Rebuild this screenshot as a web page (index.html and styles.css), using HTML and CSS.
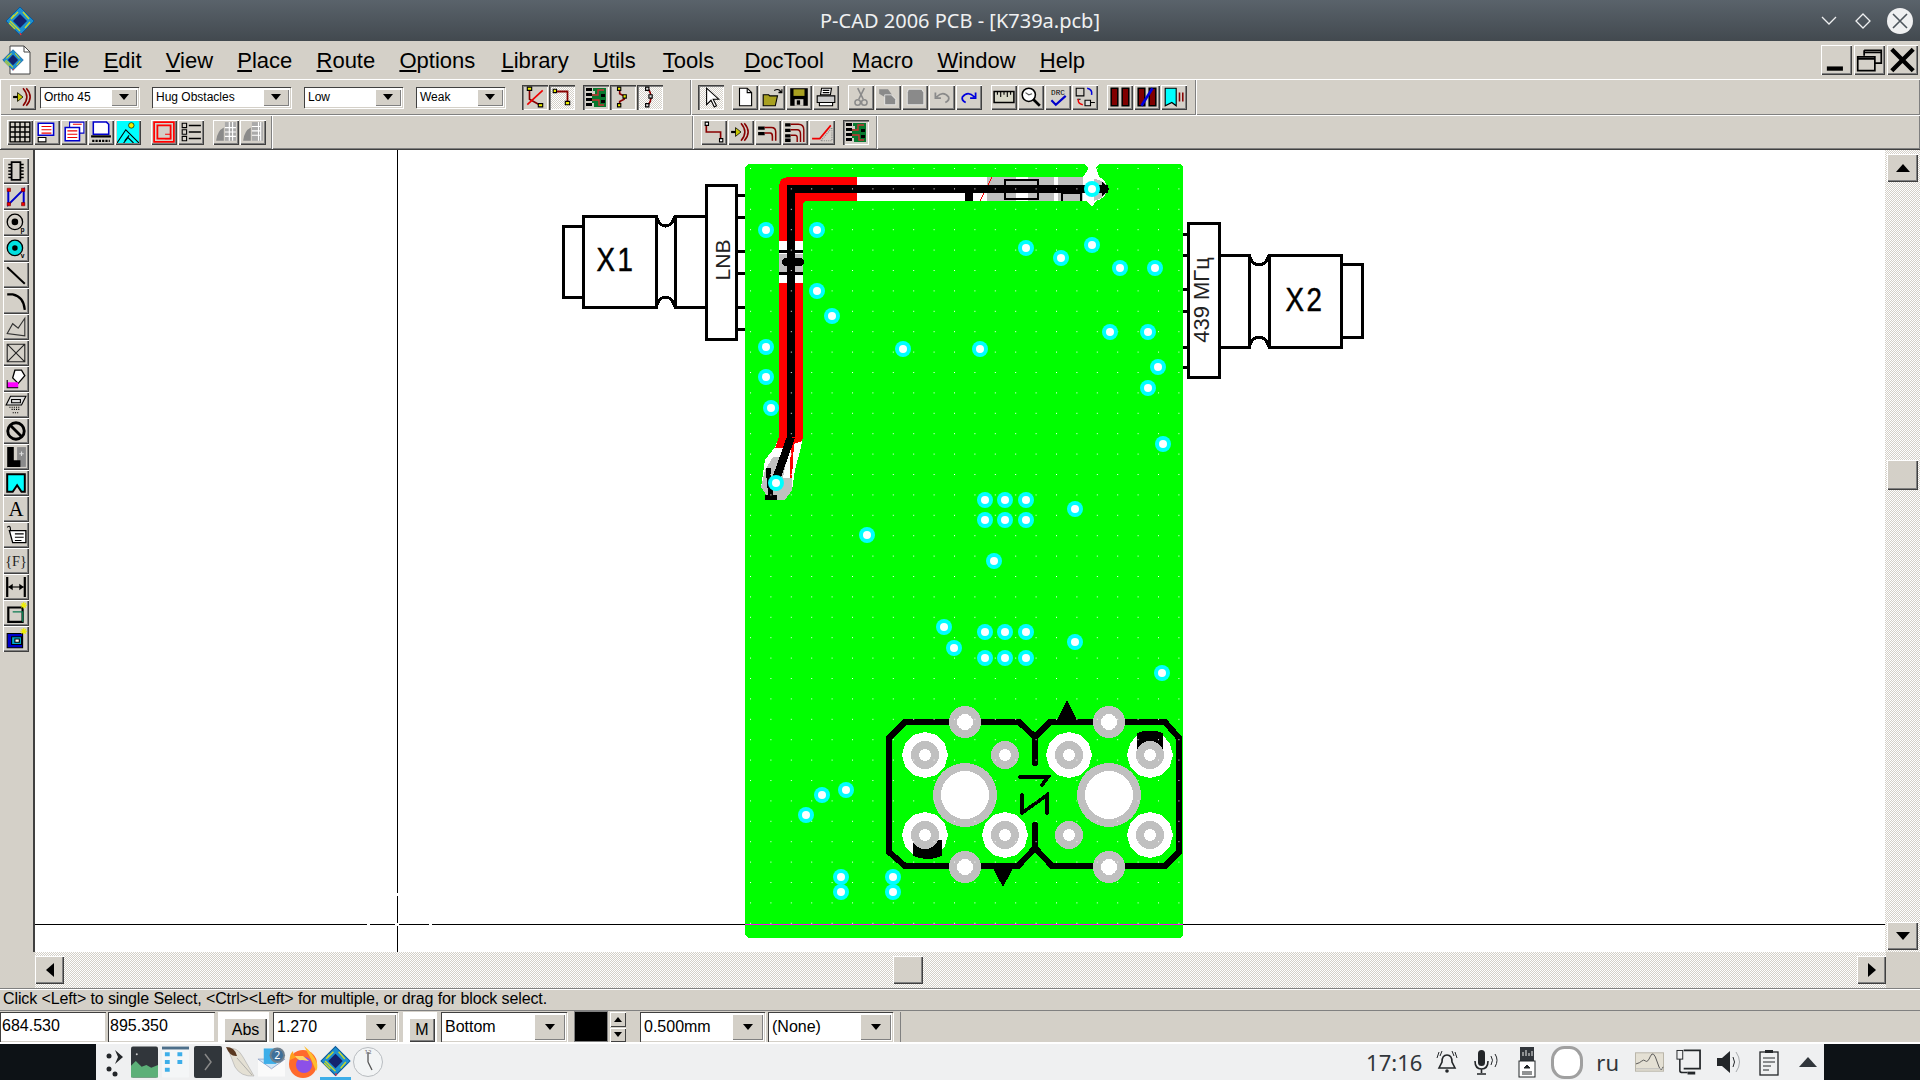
FILE: index.html
```html
<!DOCTYPE html>
<html lang="en">
<head>
<meta charset="utf-8">
<title>P-CAD 2006 PCB - [K739a.pcb]</title>
<link rel="stylesheet" href="styles.css">
</head>
<body>
<svg class="defs" width="0" height="0">
  <defs>
    <symbol id="logo" viewBox="0 0 30 30">
      <path d="M15 1 29 15 15 29 1 15z" fill="#1d8fd0" stroke="#0a5a9a"/>
      <path d="M8 15 15 8 22 15 15 22z" fill="#14246e"/>
      <path d="M5 15l5 5 5 5M7 12l6-6M18 6l6 7M20 22l5-6M4 17l6 6M9 9l-3 4" stroke="#c8d828" stroke-width="1.4" fill="none"/>
      <path d="M15 27l1 2" stroke="#e03040" stroke-width="1.5"/>
    </symbol>
    <g id="v" class="via"><circle r="8" fill="#00ffff"/><circle r="4" fill="#fff"/></g>
    <g id="oct"><path d="M0-23 12-20 20-11 23 0 20 11 12 20 0 23-12 20-20 11-23 0-20-11-12-20z" fill="#fff"/><circle r="14" fill="#c0c0c0"/><circle r="6" fill="#fff"/></g>
    <g id="gp"><circle r="14" fill="#c0c0c0"/><circle r="6" fill="#fff"/></g>
    <g id="tp"><circle r="16" fill="#c0c0c0"/><circle r="8" fill="#fff"/></g>
    <g id="hole"><circle r="32" fill="#c0c0c0"/><circle r="24" fill="#fff"/></g>
    <pattern id="dots" x="750" y="168" width="20.4" height="20.4" patternUnits="userSpaceOnUse"><rect width="1" height="1" fill="#fff"/></pattern>
  </defs>
</svg>

<header class="titlebar">
  <svg class="title-logo"><use href="#logo"/></svg>
  <div class="title-text">P-CAD 2006 PCB - [K739a.pcb]</div>
  <div class="win-controls">
    <svg class="wc" viewBox="0 0 20 20"><path d="M3 6l7 7 7-7" fill="none" stroke="#eff0f1" stroke-width="1.3"/></svg>
    <svg class="wc" viewBox="0 0 20 20"><path d="M10 3l7 7-7 7-7-7z" fill="none" stroke="#eff0f1" stroke-width="1.3"/></svg>
    <svg class="wc-close" viewBox="0 0 26 26"><circle cx="13" cy="13" r="13" fill="#eff0f1"/><path d="M6 6l14 14M20 6 6 20" stroke="#4d555c" stroke-width="1.6"/></svg>
  </div>
</header>

<nav class="menubar">
  <svg class="doc-icon" viewBox="0 0 30 30"><path d="M8 1h14l6 6v22H8z" fill="#fff" stroke="#444"/><path d="M22 1v6h6" fill="none" stroke="#444"/><use href="#logo" x="0" y="4" width="22" height="22"/></svg>
  <div class="menu-items">
    <span><u>F</u>ile</span><span><u>E</u>dit</span><span><u>V</u>iew</span><span><u>P</u>lace</span><span><u>R</u>oute</span><span class="m2"><u>O</u>ptions</span><span><u>L</u>ibrary</span><span class="m3"><u>U</u>tils</span><span class="m6"><u>T</u>ools</span><span class="m4"><u>D</u>ocTool</span><span><u>M</u>acro</span><span><u>W</u>indow</span><span><u>H</u>elp</span>
  </div>
  <div class="mdi-btns">
    <div class="mdi"><svg viewBox="0 0 28 28"><path d="M5 22h15" stroke="#000" stroke-width="4"/></svg></div>
    <div class="mdi"><svg viewBox="0 0 28 28"><path d="M9 5h16v12H19M9 5v5M9 7h16" fill="none" stroke="#000" stroke-width="1.6"/><path d="M3 11h16v13H3zM3 13h16" fill="#d4d0c8" stroke="#000" stroke-width="1.6"/></svg></div>
    <div class="mdi"><svg viewBox="0 0 28 28"><path d="M4 4l20 20M24 4 4 24" stroke="#000" stroke-width="4"/></svg></div>
  </div>
</nav>

<section class="toolrow row1">
  <div class="bar bar-a">
    <div class="btn"><svg viewBox="0 0 20 20"><path d="M1 10h6" stroke="#000" stroke-width="2"/><path d="M5 6l5 4-5 4z" fill="#c8c800" stroke="#000" stroke-width=".7"/><path d="M10 2q7 8 0 16M13 2q7 8 0 16" fill="none" stroke="#800" stroke-width="1.4"/></svg></div>
    <div class="combo c99 ml4"><span>Ortho 45</span><i class="arr"></i></div>
    <div class="combo c139 ml13"><span>Hug Obstacles</span><i class="arr"></i></div>
    <div class="combo c99 ml13"><span>Low</span><i class="arr"></i></div>
    <div class="combo c89 ml13"><span>Weak</span><i class="arr"></i></div>
    <div class="btn pressed ml17"><svg viewBox="0 0 20 20"><path d="M5 2v10l9 5" fill="none" stroke="#800" stroke-width="1.5"/><path d="M3 17 17 4" stroke="#e00" stroke-width="1.5"/><path d="M3 1h4v3H3zM13 16h4v3h-4z" fill="#ee0" stroke="#000"/></svg></div>
    <div class="btn pressed white"><svg viewBox="0 0 20 20"><path d="M4 5h11v10" fill="none" stroke="#800" stroke-width="1.6"/><path d="M2 3h3v3H2zM13 14h4v3h-4z" fill="#ee0" stroke="#000"/></svg></div>
    <div class="btn pressed ml8"><svg viewBox="0 0 22 22"><path d="M1 2h6v3H1zM1 7h6v3H1zM1 12h6v3H1zM1 17h6v3H1z"/><path d="M8 2h13v19H9v-4H7V8h3V5H8z" fill="#087a30"/><path d="M7 9h6V4h6M7 14h7v5h5" fill="none" stroke="#c33" stroke-width="1.4"/><path d="M16 8h4v3h-4zM16 14h4v3h-4z" fill="#000"/></svg></div>
    <div class="btn pressed"><svg viewBox="0 0 20 20"><path d="M7 3v4l4 2v3l-4 2v4" fill="none" stroke="#800" stroke-width="1.5"/><path d="M5 1h3v3H5zM5 16h3v3H5zM10 8h3v3h-3z" fill="#ee0" stroke="#000"/></svg></div>
    <div class="btn pressed white"><svg viewBox="0 0 20 20"><path d="M8 2q6 8 0 16" fill="none" stroke="#800" stroke-width="1.5"/><path d="M6 1h3v3H6zM6 16h3v3H6zM9 8h3v3H9z" fill="#ddd" stroke="#000"/></svg></div>
  </div>
  <div class="bar bar-b">
    <div class="btn pressed white"><svg viewBox="0 0 20 20"><path d="M6 2v15l4-4 3 6 2-1-3-6h5z" fill="#fff" stroke="#000"/></svg></div>
    <div class="grp ml8">
      <div class="btn"><svg viewBox="0 0 20 20"><path d="M5 2h7l4 4v12H5z" fill="#fff" stroke="#000"/><path d="M12 2v4h4" fill="none" stroke="#000"/></svg></div>
      <div class="btn"><svg viewBox="0 0 20 20"><path d="M2 8h5l1 1h7l-2 9H2z" fill="#a8a020" stroke="#000"/><path d="M12 4q4-2 6 1l-2 1h3v-3" fill="none" stroke="#000"/></svg></div>
      <div class="btn"><svg viewBox="0 0 20 20"><path d="M2 2h16v16H2z" fill="#000"/><path d="M5 3h10v6H5z" fill="#a8a020"/><path d="M6 12h8v6H6z" fill="#d4d0c8"/><path d="M8 13h3v4H8z"/></svg></div>
      <div class="btn"><svg viewBox="0 0 20 20"><path d="M6 2h9l-1 6H5z" fill="#fff" stroke="#000"/><path d="M2 9h16v6H2z" fill="#ccc" stroke="#000"/><path d="M4 15h12v3H4z" fill="#fff" stroke="#000"/><path d="M7 4h6M7 6h6" stroke="#000"/></svg></div>
    </div>
    <div class="grp ml9">
      <div class="btn"><svg viewBox="0 0 20 20"><path d="M7 2l5 10M13 2 8 12" stroke="#8a8a8a" stroke-width="1.4"/><circle cx="7" cy="15" r="2.5" fill="none" stroke="#8a8a8a" stroke-width="1.4"/><circle cx="13" cy="15" r="2.5" fill="none" stroke="#8a8a8a" stroke-width="1.4"/></svg></div>
      <div class="btn"><svg viewBox="0 0 20 20"><path d="M2 3h8l3 4v3H7L2 7z" fill="#8a8a8a"/><path d="M7 8h6l4 4v5H7z" fill="#8a8a8a" stroke="#fff" stroke-width=".6"/></svg></div>
      <div class="btn"><svg viewBox="0 0 20 20"><path d="M4 3h12l2 3v11H3V6z" fill="#8a8a8a" stroke="#fff" stroke-width=".6"/></svg></div>
      <div class="btn"><svg viewBox="0 0 20 20"><path d="M4 6v5h5M5 10q6-6 11 0 1 3-3 5" fill="none" stroke="#8a8a8a" stroke-width="1.6"/></svg></div>
      <div class="btn"><svg viewBox="0 0 20 20"><path d="M16 6v5h-5M15 10q-6-6-11 0-1 3 3 5" fill="none" stroke="#00d" stroke-width="1.6"/></svg></div>
    </div>
    <div class="grp ml9">
      <div class="btn"><svg viewBox="0 0 20 20"><path d="M1 5h18v10H1z" fill="#d8d8c8" stroke="#000" stroke-width="1.4"/><path d="M4 5v3M7 5v5M10 5v3M13 5v5M16 5v3" stroke="#000"/></svg></div>
      <div class="btn"><svg viewBox="0 0 20 20"><circle cx="8" cy="8" r="6" fill="#fff" stroke="#000" stroke-width="1.4"/><path d="M12 12l6 6" stroke="#000" stroke-width="2.4"/><path d="M5 6l3 2 3-1" fill="none" stroke="#555"/></svg></div>
      <div class="btn"><svg viewBox="0 0 20 20"><text x="10" y="8" class="svg-mono">DRC</text><path d="M4 13l4 4L17 9" fill="none" stroke="#00c" stroke-width="2"/></svg></div>
      <div class="btn"><svg viewBox="0 0 20 20"><path d="M2 2h7v7H2zM3 12h3" fill="none" stroke="#000"/><path d="M10 13h5v5h-5zM15 15h4" fill="#ddd" stroke="#000"/><path d="M12 2q5 1 4 6" fill="none" stroke="#00d" stroke-width="1.4"/><path d="M8 17q-5-1-4-5" fill="none" stroke="#e00" stroke-width="1.4"/></svg></div>
    </div>
    <div class="grp ml9">
      <div class="btn"><svg viewBox="0 0 20 20"><path d="M2 2h6v16H2zM12 2h6v16h-6z" fill="#800000" stroke="#000" stroke-width="1.4"/></svg></div>
      <div class="btn"><svg viewBox="0 0 20 20"><path d="M2 2h6v16H2zM12 2h6v16h-6z" fill="#800000" stroke="#000" stroke-width="1.4"/><path d="M5 18 15 2" stroke="#00d" stroke-width="2.4"/></svg></div>
      <div class="btn"><svg viewBox="0 0 20 20"><path d="M2 2h10v16l-4-3-6 3z" fill="#00ffff" stroke="#000"/><path d="M15 6v8M18 6v8" stroke="#800" stroke-width="1.4"/></svg></div>
    </div>
  </div>
  <div class="bar bar-rest"></div>
</section>

<section class="toolrow row2">
  <div class="bar bar-c">
    <div class="btn"><svg viewBox="0 0 20 20"><path d="M1 1h18v18H1zM1 5.500h18M1 10h18M1 14.500h18M5.500 1v18M10 1v18M14.500 1v18" fill="none" stroke="#000" stroke-width="1.3"/></svg></div>
    <div class="btn"><svg viewBox="0 0 20 20"><path d="M2 2h14v11H2z" fill="#fff" stroke="#00c" stroke-width="1.4"/><path d="M5 5h9M5 8h9M5 11h9" stroke="#e00"/><path d="M2 15h7v4H2z" fill="#fff" stroke="#000"/></svg></div>
    <div class="btn"><svg viewBox="0 0 20 20"><path d="M6 1h13v10H6z" fill="#fff" stroke="#00c"/><path d="M2 6h13v12H2z" fill="#fff" stroke="#00c" stroke-width="1.4"/><path d="M4 9h9M4 12h9M4 15h9M9 3h8" stroke="#e00"/></svg></div>
    <div class="btn"><svg viewBox="0 0 20 20"><path d="M3 1h12l2 2v9H3z" fill="#fff" stroke="#00c" stroke-width="1.4"/><path d="M1 14h18" stroke="#000" stroke-width="2"/><path d="M2 18h16" stroke="#000" stroke-dasharray="2 1" stroke-width="2"/></svg></div>
    <div class="btn"><svg viewBox="0 0 20 20"><path d="M0 0h20v20H0z" fill="#00ffff"/><circle cx="13" cy="4" r="2.500" fill="#ee0" stroke="#000" stroke-width=".6"/><path d="M0 20 8 8l12 12" fill="none" stroke="#000"/><path d="M6 20l4-5 5 5M11 13l-4 5" fill="none" stroke="#000"/></svg></div>
    <div class="btn ml9"><svg viewBox="0 0 20 20"><path d="M1 1h18v18H1zM4 4h12v12H4z" fill="none" stroke="#f00" stroke-width="1.6"/><path d="M11 12h5v4h-5" fill="none" stroke="#f00"/></svg></div>
    <div class="btn"><svg viewBox="0 0 20 20"><path d="M2 2h4v4H2zM2 8h4v4H2zM2 14h4v4H2z" fill="none" stroke="#000"/><path d="M8 4h11M8 10h11M8 16h11" stroke="#000" stroke-width="1.4"/></svg></div>
    <div class="btn ml8"><svg viewBox="0 0 20 20"><path d="M9 1h10v17H9z" fill="#aaa"/><path d="M9 6h10M9 10h10M9 14h10M13 1v17M16 1v17" stroke="#fff"/><path d="M1 18q1-9 7-12v12z" fill="#8a8a8a"/></svg></div>
    <div class="btn"><svg viewBox="0 0 20 20"><path d="M9 1h10v17H9z" fill="#aaa"/><path d="M9 5h8M9 9h8M9 13h8" stroke="#fff"/><path d="M17 1v17M15 1v17" stroke="#fff"/><path d="M1 18q1-9 7-12v12z" fill="#8a8a8a"/></svg></div>
  </div>
  <div class="bar bar-gap"></div>
  <div class="bar bar-d">
    <div class="btn"><svg viewBox="0 0 20 20"><path d="M3 3v7h13v7" fill="none" stroke="#800" stroke-width="1.5"/><path d="M2 1h3v3H2zM15 16h3v3h-3z" fill="#fff" stroke="#000"/></svg></div>
    <div class="btn"><svg viewBox="0 0 20 20"><path d="M1 10h6" stroke="#000" stroke-width="2"/><path d="M5 6l5 4-5 4z" fill="#c8c800" stroke="#000" stroke-width=".7"/><path d="M10 2q7 8 0 16M13 2q7 8 0 16" fill="none" stroke="#800" stroke-width="1.4"/></svg></div>
    <div class="btn"><svg viewBox="0 0 20 20"><path d="M1 5h6v3H1zM1 10h6v3H1z"/><path d="M7 6h6q4 0 4 4v8M7 11h5q2 0 2 3v4" fill="none" stroke="#800" stroke-width="1.4"/></svg></div>
    <div class="btn"><svg viewBox="0 0 20 20"><path d="M1 2h5v3H1zM1 7h5v3H1zM1 12h5v3H1zM1 16h5v3H1z"/><path d="M6 3h7q5 0 5 5v11M6 8h6q3 0 3 4v7M6 13h4q2 0 2 2v4" fill="none" stroke="#800" stroke-width="1.3"/></svg></div>
    <div class="btn"><svg viewBox="0 0 20 20"><path d="M1 16h7L18 4" fill="none" stroke="#e00" stroke-width="1.5"/><path d="M9 18 19 6v12z" fill="none" stroke="#888" stroke-dasharray="1 1"/></svg></div>
    <div class="btn pressed ml7"><svg viewBox="0 0 22 22"><path d="M1 2h6v3H1zM1 7h6v3H1zM1 12h6v3H1zM1 17h6v3H1z"/><path d="M8 2h13v19H9v-4H7V8h3V5H8z" fill="#087a30"/><path d="M7 9h6V4h6M7 14h7v5h5" fill="none" stroke="#c33" stroke-width="1.4"/><path d="M16 8h4v3h-4zM16 14h4v3h-4z" fill="#000"/></svg></div>
  </div>
  <div class="bar bar-rest"></div>
</section>

<main class="workspace">
  <aside class="side">
    <div class="btn sq"><svg viewBox="0 0 20 20"><path d="M6 2h8v16H6z" fill="none" stroke="#000" stroke-width="1.6"/><path d="M3 4h3M3 7h3M3 10h3M3 13h3M3 16h3M14 4h3M14 7h3M14 10h3M14 13h3M14 16h3" stroke="#000" stroke-width="1.4"/></svg></div>
    <div class="btn sq"><svg viewBox="0 0 20 20"><path d="M3 3v14L17 3v14" fill="none" stroke="#00c" stroke-width="1.8"/><path d="M2 2h3v3H2zM15 2h3v3h-3zM2 15h3v3H2zM15 15h3v3h-3z" fill="#e00" stroke="#600" stroke-width=".5"/></svg></div>
    <div class="btn sq"><svg viewBox="0 0 20 20"><circle cx="9" cy="9" r="7" fill="none" stroke="#000" stroke-width="1.2"/><circle cx="9" cy="9" r="3"/><text x="16" y="18" class="svg-tiny">p</text></svg></div>
    <div class="btn sq"><svg viewBox="0 0 20 20"><circle cx="9" cy="9" r="7" fill="#00e0e0" stroke="#000" stroke-width="1.2"/><circle cx="9" cy="9" r="2.500"/><text x="16" y="18" class="svg-tiny">v</text></svg></div>
    <div class="btn sq"><svg viewBox="0 0 20 20"><path d="M2 3l16 15" stroke="#000" stroke-width="1.8"/></svg></div>
    <div class="btn sq"><svg viewBox="0 0 20 20"><path d="M2 4h5q10 2 11 14" fill="none" stroke="#000" stroke-width="2"/></svg></div>
    <div class="btn sq"><svg viewBox="0 0 20 20"><path d="M2 16 7 7l5 4 6-9v16z" fill="none" stroke="#333"/></svg></div>
    <div class="btn sq"><svg viewBox="0 0 20 20"><path d="M2 2h16v16H2zM2 2l16 16M18 2 2 18" fill="none" stroke="#222"/></svg></div>
    <div class="btn sq"><svg viewBox="0 0 20 20"><path d="M9 2h6l3 5-6 7-5-5z" fill="#fff" stroke="#000" stroke-width="1.2"/><path d="M2 13h10v5H2z" fill="#f0f"/><path d="M2 11v7h10" fill="none" stroke="#000"/></svg></div>
    <div class="btn sq"><svg viewBox="0 0 20 20"><path d="M5 2h14l-4 8H1z" fill="#ddd" stroke="#000"/><path d="M6 5h8v3H6z" fill="none" stroke="#000"/><path d="M4 12h10M6 14h8M7 17h6" stroke="#000" stroke-dasharray="1 1"/></svg></div>
    <div class="btn sq"><svg viewBox="0 0 20 20"><circle cx="10" cy="10" r="7.500" fill="none" stroke="#000" stroke-width="2.600"/><path d="M5 5l10 10" stroke="#000" stroke-width="2.600"/></svg></div>
    <div class="btn sq"><svg viewBox="0 0 20 20"><path d="M11 1h8v18H11z" fill="#8a8a8a"/><path d="M2 1h6v12h6v6H2z" fill="#000"/><path d="M15 5v4M13 7h4" stroke="#ddd"/></svg></div>
    <div class="btn sq"><svg viewBox="0 0 20 20"><path d="M2 2h16v16h-3l-4-6-4 6H2z" fill="#00ffff" stroke="#000" stroke-width="1.800"/></svg></div>
    <div class="btn sq"><svg viewBox="0 0 20 20"><text x="10" y="16.500" class="svg-serif">A</text></svg></div>
    <div class="btn sq"><svg viewBox="0 0 20 20"><path d="M4 6h15v11H7z" fill="#fff" stroke="#000" stroke-width="1.200"/><path d="M9 9h8M9 12h8M9 15h6" stroke="#000"/><path d="M2 3q3-3 3 3" fill="none" stroke="#000"/></svg></div>
    <div class="btn sq"><svg viewBox="0 0 20 20"><text x="10" y="14.500" class="svg-braces">{F}</text></svg></div>
    <div class="btn sq"><svg viewBox="0 0 20 20"><path d="M2 1v18M18 1v18" stroke="#000" stroke-width="2"/><path d="M3 10h14" stroke="#000"/><path d="M3 10l4-3v6zM17 10l-4-3v6z"/></svg></div>
    <div class="btn sq"><svg viewBox="0 0 20 20"><path d="M3 5h13v13H3z" fill="none" stroke="#000" stroke-width="2"/><path d="M7 9h9v9" fill="none" stroke="#0a7a50" stroke-width="1.200"/><path d="M17 0v6M14 3h6M15 1l4 4M19 1l-4 4" stroke="#ee0"/></svg></div>
    <div class="btn sq"><svg viewBox="0 0 20 20"><path d="M2 5h14v13H2z" fill="#00c" stroke="#000"/><path d="M6 8h9v7H6z" fill="#0ac" stroke="#000"/><path d="M9 10h4v3H9z" fill="#fff" stroke="#000"/><path d="M17 0v6M14 3h6M15 1l4 4M19 1l-4 4" stroke="#ee0"/></svg></div>
  </aside>

  <div class="canvas">
    <svg class="board" viewBox="35 150 1850 802" width="1850" height="802">
      <!-- connector X1 -->
      <g fill="#fff" stroke="#000" stroke-width="3">
        <rect x="563" y="226" width="20" height="71"/>
        <rect x="583" y="216" width="73" height="91"/>
        <rect x="675" y="216" width="31" height="91"/>
        <path d="M656 216q3 10 9.500 10t9.500-10M656 307q3-10 9.500-10t9.500 10" fill="none"/>
        <rect x="706" y="185" width="30" height="154"/>
        <path d="M736 195h9M736 217h9M736 251h9M736 273h9M736 307h9M736 329h9" fill="none"/>
      </g>
      <text class="pcb-big" transform="translate(616 271) scale(.84 1)">X1</text>
      <text class="pcb-small" transform="translate(730 260) rotate(-90)">LNB</text>
      <!-- connector X2 -->
      <g fill="#fff" stroke="#000" stroke-width="3">
        <rect x="1188" y="223" width="31" height="154"/>
        <rect x="1219" y="255" width="30" height="92"/>
        <rect x="1269" y="255" width="72" height="92"/>
        <rect x="1341" y="264" width="21" height="73"/>
        <path d="M1249 255q3 10 10 10t10-10M1249 347q3-10 10-10t10 10" fill="none"/>
        <path d="M1183 234h5M1183 255h5M1183 289h5M1183 311h5M1183 347h5M1183 367h5" fill="none"/>
      </g>
      <text class="pcb-big" transform="translate(1305 311) scale(.84 1)">X2</text>
      <text class="pcb-small pcb-freq" transform="translate(1209 300) rotate(-90)">439 МГц</text>

      <!-- board -->
      <path d="M748 164H1085L1088 168 1090 175H1094L1096 168 1099 164H1180L1183 167V935L1180 938H748L745 935V167z" fill="#00ff00"/>
      <!-- etched channel -->
      <path d="M789 177H1083Q1086 172 1089 168L1092 175 1096 168Q1098 172 1099 177Q1106 180 1108 189 1106 198 1096 201L1092 207 1086 201H803V437L801 447 795 470 792 490 785 500H770L761 487 765 460 775 447 779 437V187Q779 177 789 177z" fill="#fff"/>
      <path d="M789 177H857V201H807Q803 201 803 205V241H779V187Q779 177 789 177zM779 283H803V437L802 441 794 444 792 478 790 478 791 437 787 448H775L779 437z" fill="#f00"/>
      <path d="M987 177H1054V201H987zM1058 177H1083V201H1058zM1094 179Q1106 180 1108 189 1106 198 1094 201zM779 254H803V273H779zM773 457H787L783 478H792V490L785 500H770L761 487 765 470z" fill="#c0c0c0"/>
      <path d="M1016 193h12v8h-12zM1016 177h12v4h-12z" fill="#fff"/>
      <path d="M992 177 980 201" stroke="#f00" stroke-width="1"/>
      <!-- traces -->
      <path d="M791 437V189H1108" fill="none" stroke="#000" stroke-width="8"/>
      <path d="M791 437 775 482" fill="none" stroke="#000" stroke-width="8"/>
      <path d="M1102 182 1109 189 1102 196z"/>
      <path d="M965 193h8v8h-8z"/>
      <path d="M768 468 771 498M765 497h12" stroke="#000" stroke-width="5"/>
      <path d="M779 251h24M779 273h24" stroke="#000" stroke-width="3"/>
      <path d="M786 262h14" stroke="#000" stroke-width="8" stroke-linecap="round"/>
      <rect x="1005" y="180" width="33" height="19" fill="none" stroke="#000" stroke-width="2"/>
      <path d="M1062 201v-8h19v8" fill="#c0c0c0" stroke="#000" stroke-width="2"/>

      <!-- footprint -->
      <path d="M950 722H905L889 738V852L905 866H1018L1035 848 1052 866H1165L1179 852V738L1165 722H1050L1035 737 1019 722H950M1035 737V763M1035 825V848" fill="none" stroke="#000" stroke-width="6" stroke-linecap="round" stroke-linejoin="miter"/>
      <path d="M1067 702 1057 722H1077zM1003 885 993 866H1013z" stroke="#000" stroke-width="2" stroke-linejoin="round"/>
      <path d="M1020 777H1048L1042 785M1022 813V795M1022 813 1047 795V813" fill="none" stroke="#000" stroke-width="3.500" stroke-linecap="round"/>
      <use href="#oct" x="925" y="755"/><use href="#oct" x="1069" y="755"/>
      <use href="#oct" x="925" y="835"/><use href="#oct" x="1005" y="835"/><use href="#oct" x="1150" y="835"/>
      <path d="M1127 755 1130 744 1137 735V760H1163V735L1170 744 1173 755 1170 766 1162 775 1150 778 1138 775 1130 766z" fill="#fff"/>
      <path d="M1137 733Q1150 728 1163 733V760H1137z"/>
      <use href="#gp" x="1150" y="755"/>
      <path d="M913 840H942V856Q928 862 913 856z"/>
      <use href="#gp" x="925" y="835"/>
      <use href="#gp" x="1005" y="755"/><use href="#gp" x="1069" y="835"/>
      <use href="#tp" x="965" y="722"/><use href="#tp" x="1109" y="722"/><use href="#tp" x="965" y="867"/><use href="#tp" x="1109" y="867"/>
      <use href="#hole" x="965" y="795"/><use href="#hole" x="1109" y="795"/>

      <!-- grid -->
      <rect x="745" y="164" width="438" height="774" fill="url(#dots)"/>

      <!-- vias -->
      <use href="#v" x="766" y="230"/><use href="#v" x="817" y="230"/><use href="#v" x="1026" y="248"/><use href="#v" x="1061" y="258"/><use href="#v" x="1092" y="245"/><use href="#v" x="1120" y="268"/><use href="#v" x="1155" y="268"/><use href="#v" x="817" y="291"/><use href="#v" x="832" y="316"/><use href="#v" x="766" y="347"/><use href="#v" x="1110" y="332"/><use href="#v" x="1148" y="332"/><use href="#v" x="903" y="349"/><use href="#v" x="980" y="349"/><use href="#v" x="766" y="377"/><use href="#v" x="1158" y="367"/><use href="#v" x="1148" y="388"/><use href="#v" x="771" y="408"/><use href="#v" x="1163" y="444"/>
      <use href="#v" x="985" y="500"/><use href="#v" x="1005" y="500"/><use href="#v" x="1026" y="500"/><use href="#v" x="985" y="520"/><use href="#v" x="1005" y="520"/><use href="#v" x="1026" y="520"/><use href="#v" x="1075" y="509"/><use href="#v" x="867" y="535"/><use href="#v" x="994" y="561"/>
      <use href="#v" x="944" y="627"/><use href="#v" x="954" y="648"/><use href="#v" x="985" y="632"/><use href="#v" x="1005" y="632"/><use href="#v" x="1026" y="632"/><use href="#v" x="985" y="658"/><use href="#v" x="1005" y="658"/><use href="#v" x="1026" y="658"/><use href="#v" x="1075" y="642"/><use href="#v" x="1162" y="673"/>
      <use href="#v" x="822" y="795"/><use href="#v" x="846" y="790"/><use href="#v" x="806" y="815"/><use href="#v" x="841" y="877"/><use href="#v" x="841" y="892"/><use href="#v" x="893" y="877"/><use href="#v" x="893" y="892"/>
      <use href="#v" x="1092" y="189"/><use href="#v" x="776" y="483"/>

      <!-- crosshair -->
      <path d="M397 150V893M397 896V923M397 926V952M35 924H367M370 924H395M399 924H429M432 924H745M1183 924H1885" stroke="#000" stroke-width="1" fill="none"/>
      <path d="M745 924.500H1183" stroke="#ff00ff" stroke-width="1"/>
    </svg>
  </div>

  <div class="vscroll">
    <div class="sb-btn"><i class="tri up"></i></div>
    <div class="sb-thumb v-thumb"></div>
    <div class="sb-btn v-down"><i class="tri down"></i></div>
  </div>
</main>

<div class="hscroll-row">
  <div class="hscroll">
    <div class="sb-btn h-btn"><i class="tri left"></i></div>
    <div class="sb-thumb h-thumb"></div>
    <div class="sb-btn h-btn h-right"><i class="tri right"></i></div>
  </div>
</div>

<div class="status">Click &lt;Left&gt; to single Select, &lt;Ctrl&gt;&lt;Left&gt; for multiple, or drag for block select.</div>

<div class="controls">
  <div class="field w106">684.530</div>
  <div class="field w107 ml2">895.350</div>
  <div class="etched w51 ml3"><div class="pbtn">Abs</div></div>
  <div class="combo big w125 ml4"><span>1.270</span><i class="arr"></i></div>
  <div class="etched w34 ml5"><div class="pbtn">M</div></div>
  <div class="combo big w126 ml4"><span>Bottom</span><i class="arr"></i></div>
  <div class="swatch ml8"></div>
  <div class="spin ml3"><div class="spin-b"><i class="tri-s up"></i></div><div class="spin-b"><i class="tri-s down"></i></div></div>
  <div class="combo big w125 ml14"><span>0.500mm</span><i class="arr"></i></div>
  <div class="combo big w125 ml3"><span>(None)</span><i class="arr"></i></div>
  <div class="ctl-rest"></div>
</div>

<footer class="taskbar">
  <div class="wall wall-l"></div>
  <div class="tasks">
    <svg class="ti t-dots" viewBox="0 0 18 30"><circle cx="3" cy="9" r="2.500" fill="#232629"/><circle cx="3" cy="22" r="2.500" fill="#232629"/><circle cx="9" cy="27" r="2.500" fill="#232629"/><path d="M9 3l8 7-8 7 3-7z" fill="#232629"/></svg>
    <svg class="ti t28" viewBox="0 0 28 32"><rect width="28" height="32" rx="2" fill="#31363b"/><path d="M0 32V20l5-5 6 6 5-2 5 3 7-3v13z" fill="#5cb078"/><circle cx="6" cy="8" r="1" fill="#ccc"/></svg>
    <svg class="ti t28" viewBox="0 0 28 32"><rect width="28" height="32" rx="1" fill="#f4f6f7"/><rect width="28" height="3" fill="#4d6f8a"/><path d="M3 6h5v4H3zM16 6h5v4h-5zM3 14h5v4H3zM16 14h5v4h-5zM3 22h5v4H3z" fill="#3daee9"/></svg>
    <svg class="ti t30" viewBox="0 0 28 32"><rect width="28" height="32" rx="2" fill="#31363b"/><path d="M11 8l6 8-6 8" fill="none" stroke="#888" stroke-width="1.500"/></svg>
    <svg class="ti t30" viewBox="0 0 30 32"><path d="M3 3q9-3 15 8l11 19q-13 1-19-9z" fill="#e4e0d4" stroke="#aaa" stroke-width=".6"/><path d="M1 1q9 0 11 9-7 1-11-9z" fill="#5a3820"/><path d="M12 12l15 17" stroke="#999" stroke-width=".7"/></svg>
    <svg class="ti t29" viewBox="0 0 30 32"><path d="M1 13h28v18H1z" fill="#fafafa"/><path d="M1 13l14 10 14-10z" fill="#cfe6f6" stroke="#9ac"/><path d="M7 2h13v16H7z" fill="#3daee9"/><circle cx="21" cy="9" r="8" fill="#6f7f8c"/><circle cx="21" cy="9" r="6" fill="#3d6f9a"/><text x="21" y="13" class="svg-badge">2</text></svg>
    <svg class="ti t30" viewBox="0 0 30 32"><circle cx="15" cy="18" r="14" fill="#ff6a2c"/><path d="M16 0q9 7 13 17 1 5-1 8l-5-12z" fill="#ffbd2e"/><path d="M2 14q-1-5 3-9 0 5 4 6z" fill="#ffa01c"/><circle cx="16" cy="19" r="8" fill="#8c50e8"/><path d="M7 10q3 5 7 4l7 1-6-5z" fill="#ffd567"/></svg>
    <div class="pcad-task"><svg class="ti t31"><use href="#logo"/></svg></div>
    <svg class="ti t30" viewBox="0 0 30 32"><circle cx="15" cy="16" r="14.500" fill="#f2f4f5" stroke="#b8bcc0"/><path d="M15 16V6M15 16l4 8" stroke="#555" stroke-width="1.300"/><text x="15" y="8" class="svg-clock">12</text></svg>
  </div>
  <div class="tray">
    <span class="clock">17:16</span>
    <svg class="tr tr-bell" viewBox="0 0 24 24"><path d="M12 5q-5 0-5 7l-3 6h16l-3-6q0-7-5-7z" fill="none" stroke="#232629" stroke-width="1.600"/><circle cx="12" cy="21" r="1.800" fill="#232629"/><path d="M4 2 2 8M20 2l2 6M7 1 5 6M17 1l2 5" stroke="#232629"/></svg>
    <svg class="tr tr-mic" viewBox="0 0 28 26"><rect x="5" y="1" width="7" height="16" rx="3.500" fill="#232629"/><path d="M2 12q0 8 6.500 8T15 12M8.500 20v4M4 25h9" fill="none" stroke="#232629" stroke-width="1.600"/><path d="M18 7q3 4 0 9M22 5q4 6 0 13" fill="none" stroke="#232629"/></svg>
    <svg class="tr tr-usb" viewBox="0 0 18 32"><rect x="2" y="1" width="14" height="14" fill="#31363b"/><path d="M5 10V6M8 10V4M11 10V7M14 10V5" stroke="#eee"/><rect x="1" y="15" width="16" height="16" fill="#fff" stroke="#232629"/><path d="M6 22l3-3 3 3zM4 26h10M4 28h10" fill="#232629" stroke="#232629"/></svg>
    <div class="blob"></div>
    <span class="lang">ru</span>
    <svg class="tr tr-graph" viewBox="0 0 30 20"><rect x=".5" y=".5" width="29" height="19" fill="#e4e0d4" stroke="#b8b4a8"/><path d="M1 12q4-1 6-3t4 0 5-5 7 6 6 5" fill="none" stroke="#555"/><path d="M1 17h28" stroke="#bbb"/></svg>
    <svg class="tr tr-net" viewBox="0 0 26 28"><path d="M8 2h17v19H8" fill="none" stroke="#232629" stroke-width="1.800"/><rect x="1" y="2" width="6" height="9" fill="#eff0f1" stroke="#232629"/><path d="M4 11v12q0 2 3 2h5" fill="none" stroke="#232629" stroke-width="1.600"/><path d="M12 24h8v3h-8z" fill="#232629"/></svg>
    <svg class="tr tr-vol" viewBox="0 0 26 26"><path d="M1 9h5l8-7v22l-8-7H1z" fill="#232629"/><path d="M17 8q3 5 0 10" fill="none" stroke="#232629"/><path d="M20 3q7 10 0 20" fill="none" stroke="#a8abae"/></svg>
    <svg class="tr tr-clip" viewBox="0 0 20 28"><rect x="1" y="4" width="18" height="23" fill="none" stroke="#232629" stroke-width="1.300"/><path d="M6 5V2h8v3z" fill="#232629"/><path d="M4 10h12M4 14h12M4 18h8M4 22h6" stroke="#232629"/></svg>
    <i class="tray-arrow"></i>
  </div>
  <div class="wall wall-r"></div>
</footer>
</body>
</html>
```
FILE: styles.css
```css
* { box-sizing: border-box; }
html, body { margin: 0; padding: 0; }
body {
  width: 1920px;
  height: 1080px;
  overflow: hidden;
  display: flex;
  flex-direction: column;
  background: #d4d0c8;
  font-family: "Liberation Sans", Arial, sans-serif;
  color: #000;
}
.defs { position: absolute; }

/* title bar */
.titlebar {
  height: 41px;
  flex: none;
  display: flex;
  align-items: center;
  position: relative;
  background: linear-gradient(#5a636b, #42494f);
}
.title-logo { width: 30px; height: 30px; margin-left: 5px; }
.title-text {
  position: absolute;
  left: 0;
  right: 0;
  text-align: center;
  color: #eff0f1;
  font: 20px "Noto Sans", sans-serif;
}
.win-controls { margin-left: auto; display: flex; align-items: center; gap: 14px; padding-right: 7px; }
.wc { width: 20px; height: 20px; }
.wc-close { width: 26px; height: 26px; }

/* menu */
.menubar { height: 38px; flex: none; display: flex; align-items: center; }
.doc-icon { width: 30px; height: 30px; margin-left: 2px; flex: none; }
.menu-items { display: flex; gap: 24.200px; margin-left: 12px; font-size: 22px; line-height: 26px; padding-top: 2px; }
.menu-items u { text-underline-offset: 2px; }
.menu-items .m2 { margin-right: 2px; }
.menu-items .m3 { margin-right: 3px; }
.menu-items .m6 { margin-right: 6px; }
.menu-items .m4 { margin-right: 4px; }
.mdi-btns { margin-left: auto; display: flex; gap: 2px; padding-right: 2px; }
.mdi {
  width: 31px;
  height: 30px;
  background: #d4d0c8;
  box-shadow: inset 1px 1px #fff, inset -1px -1px #404040, inset -2px -2px #808080;
  display: flex;
}
.mdi svg { width: 100%; height: 100%; }

/* toolbars */
.toolrow { flex: none; display: flex; }
.row1 { height: 36px; }
.row2 { height: 35px; border-bottom: 1px solid #404040; }
.bar {
  display: flex;
  align-items: center;
  height: 100%;
  box-shadow: inset 1px 1px #fff, inset 0 -1px #808080, inset -1px 0 #808080;
}
.bar-a { width: 691px; padding-left: 10px; }
.bar-b { width: 505px; padding-left: 7px; }
.bar-c { width: 272px; padding-left: 7px; gap: 1px; }
.bar-gap { width: 421px; }
.bar-d { width: 184px; padding-left: 8px; gap: 1px; }
.bar-rest { flex: 1; }
.grp { display: flex; gap: 1px; }
.btn {
  width: 26px;
  height: 25px;
  flex: none;
  display: flex;
  align-items: center;
  justify-content: center;
  background: #d4d0c8;
  box-shadow: inset 1px 1px #fff, inset -1px -1px #404040, inset -2px -2px #808080;
}
.btn svg { width: 22px; height: 22px; }
.btn.pressed { box-shadow: inset 1px 1px #404040, inset 2px 2px #808080, inset -1px -1px #fff; }
.btn.white {
  background: conic-gradient(#fff 25%, #d4d0c8 0 50%, #fff 0 75%, #d4d0c8 0) 0 0 / 2px 2px;
}
.btn.sq { width: 26px; height: 26px; }
.combo {
  height: 21px;
  flex: none;
  display: flex;
  align-items: center;
  background: #fff;
  font-size: 12px;
  box-shadow: inset 1px 1px #404040, inset -1px -1px #d4d0c8, 1px 1px #fff;
  padding: 2px 2px 2px 4px;
}
.combo span { flex: 1; white-space: nowrap; }
.arr {
  width: 26px;
  height: 100%;
  background: #d4d0c8;
  box-shadow: inset 1px 1px #fff, inset -1px -1px #808080;
  position: relative;
}
.arr::after {
  content: "";
  position: absolute;
  left: 50%;
  top: 50%;
  margin: -3px 0 0 -5px;
  border: 5px solid transparent;
  border-bottom: 0;
  border-top: 6px solid #000;
}
.c99 { width: 99px; }
.c139 { width: 139px; }
.c89 { width: 89px; }
.ml2 { margin-left: 2px; }
.ml3 { margin-left: 3px; }
.ml4 { margin-left: 4px; }
.ml5 { margin-left: 5px; }
.ml7 { margin-left: 7px; }
.ml8 { margin-left: 8px; }
.ml9 { margin-left: 9px; }
.ml13 { margin-left: 13px; }
.ml14 { margin-left: 14px; }
.ml17 { margin-left: 17px; }
.bar-a .btn + .btn:not(.ml8) { margin-left: 1px; }

.svg-mono { font: 7px "Liberation Mono", monospace; text-anchor: middle; }
.svg-tiny { font: bold 6px "Liberation Sans", sans-serif; text-anchor: middle; }
.svg-serif { font: 19px "Liberation Serif", serif; text-anchor: middle; }
.svg-braces { font: 13px "Liberation Serif", serif; text-anchor: middle; fill: #222; }
.svg-badge { font: 11px "Noto Sans", sans-serif; text-anchor: middle; fill: #fff; }
.svg-clock { font: 6px "Noto Sans", sans-serif; text-anchor: middle; fill: #666; }

/* workspace */
.workspace { height: 802px; flex: none; display: flex; }
.side {
  width: 35px;
  flex: none;
  border-right: 2px solid #404040;
  padding: 8px 0 0 3px;
  display: flex;
  flex-direction: column;
}
.canvas { width: 1850px; flex: none; background: #fff; overflow: hidden; }
.board { display: block; shape-rendering: crispEdges; }
.via { shape-rendering: geometricPrecision; }
.pcb-big { font: 33px "Liberation Sans", sans-serif; text-anchor: middle; stroke: #000; stroke-width: .5px; letter-spacing: 3px; }
.pcb-small { font: 21px "Liberation Sans", sans-serif; text-anchor: middle; fill: #222; }
.pcb-freq { font-size: 22px; }

.vscroll, .hscroll {
  background: conic-gradient(#fff 25%, #d4d0c8 0 50%, #fff 0 75%, #d4d0c8 0) 0 0 / 2px 2px;
}
.vscroll { flex: 1; display: flex; flex-direction: column; align-items: center; padding: 4px 0 2px; }
.sb-btn, .sb-thumb {
  background: #d4d0c8;
  box-shadow: inset 1px 1px #fff, inset -1px -1px #404040, inset -2px -2px #808080;
  display: flex;
  align-items: center;
  justify-content: center;
}
.vscroll .sb-btn { width: 31px; height: 28px; }
.v-thumb { width: 31px; height: 30px; margin-top: 278px; }
.v-down { margin-top: auto; }
.hscroll-row { height: 36px; flex: none; padding: 0 34px 0 35px; }
.hscroll { height: 100%; display: flex; align-items: center; }
.h-btn { width: 29px; height: 28px; }
.h-thumb { width: 30px; height: 28px; margin-left: 829px; }
.h-right { margin-left: auto; }
.tri { width: 0; height: 0; border: 7px solid transparent; }
.tri.up { border-top: 0; border-bottom: 8px solid #000; }
.tri.down { border-bottom: 0; border-top: 8px solid #000; }
.tri.left { border-left: 0; border-right: 8px solid #000; }
.tri.right { border-right: 0; border-left: 8px solid #000; }

/* status */
.status {
  height: 23px;
  flex: none;
  font-size: 16px;
  letter-spacing: -.11px;
  line-height: 22px;
  padding-left: 3px;
  box-shadow: inset 0 1px #808080, inset 0 2px #fff, inset 0 -1px #808080;
  white-space: nowrap;
}

/* controls */
.controls { height: 33px; flex: none; display: flex; align-items: flex-start; padding-top: 1px; }
.field {
  height: 30px;
  flex: none;
  background: #fff;
  font-size: 16px;
  line-height: 28px;
  padding-left: 2px;
  box-shadow: inset 1px 1px #404040, inset -1px -1px #d4d0c8;
}
.w106 { width: 106px; }
.w107 { width: 107px; }
.w51 { width: 51px; }
.w34 { width: 34px; }
.w125 { width: 125px; }
.w126 { width: 126px; }
.etched {
  height: 30px;
  flex: none;
  display: flex;
  align-items: flex-end;
  justify-content: flex-end;
  padding-right: 2px;
  background: #fff;
  box-shadow: inset -1px -1px #fff;
}
.pbtn {
  flex: 1;
  margin-left: 6px;
  height: 24px;
  background: #d4d0c8;
  font-size: 16px;
  line-height: 24px;
  text-align: center;
  box-shadow: inset 1px 1px #fff, inset -1px -1px #404040, inset -2px -2px #808080;
}
.combo.big { height: 30px; font-size: 16px; padding: 2px 2px 2px 4px; }
.big .arr { width: 31px; }
.swatch { width: 32px; height: 29px; background: #000; box-shadow: 0 0 0 1px #808080; flex: none; }
.spin { width: 16px; height: 30px; flex: none; display: flex; flex-direction: column; gap: 1px; }
.spin-b {
  flex: 1;
  display: flex;
  align-items: center;
  justify-content: center;
  box-shadow: inset 1px 1px #fff, inset -1px -1px #404040;
}
.tri-s { width: 0; height: 0; border: 4px solid transparent; }
.tri-s.up { border-top: 0; border-bottom: 5px solid #000; }
.tri-s.down { border-bottom: 0; border-top: 5px solid #000; }
.ctl-rest { flex: 1; margin-left: 7px; height: 30px; box-shadow: inset 1px 0 #808080; }

/* taskbar */
.taskbar {
  height: 36px;
  flex: none;
  display: flex;
  background: #eff0f1;
  box-shadow: 0 -2px #fff;
  position: relative;
}
.wall { background: #0d1216; flex: none; }
.wall-l { width: 96px; }
.wall-r { width: 96px; }
.tasks { display: flex; align-items: center; padding-left: 10px; }
.ti { flex: none; display: block; height: 32px; }
.t-dots { width: 18px; margin-right: 7px; }
.t28 { width: 27px; margin-right: 4px; }
.t30 { width: 30px; margin-right: 2px; }
.t29 { width: 29px; margin-right: 2px; }
.t31 { width: 31px; }
.pcad-task { height: 36px; display: flex; align-items: center; border-bottom: 3px solid #3daee9; margin-right: 2px; }
.tray { flex: 1; display: flex; align-items: center; }
.clock { margin-left: auto; font: 22px "Noto Sans", sans-serif; color: #31363b; margin-right: 13px; }
.tr { flex: none; display: block; }
.tr-bell { width: 24px; height: 26px; margin-right: 14px; }
.tr-mic { width: 28px; height: 26px; margin-right: 17px; }
.tr-usb { width: 18px; height: 32px; margin-right: 15px; }
.blob {
  width: 32px;
  height: 33px;
  flex: none;
  background: #fff;
  border: 3px solid #a0a0a0;
  border-radius: 42%;
  margin-right: 13px;
}
.lang { font: 22px "Noto Sans", sans-serif; color: #31363b; margin-right: 16px; }
.tr-graph { width: 29px; height: 20px; margin-right: 12px; }
.tr-net { width: 25px; height: 28px; margin-right: 15px; }
.tr-vol { width: 26px; height: 26px; margin-right: 17px; }
.tr-clip { width: 20px; height: 28px; margin-right: 20px; }
.tray-arrow {
  width: 0;
  height: 0;
  border: 9px solid transparent;
  border-top: 0;
  border-bottom: 10px solid #31363b;
  margin-right: 7px;
}
```
